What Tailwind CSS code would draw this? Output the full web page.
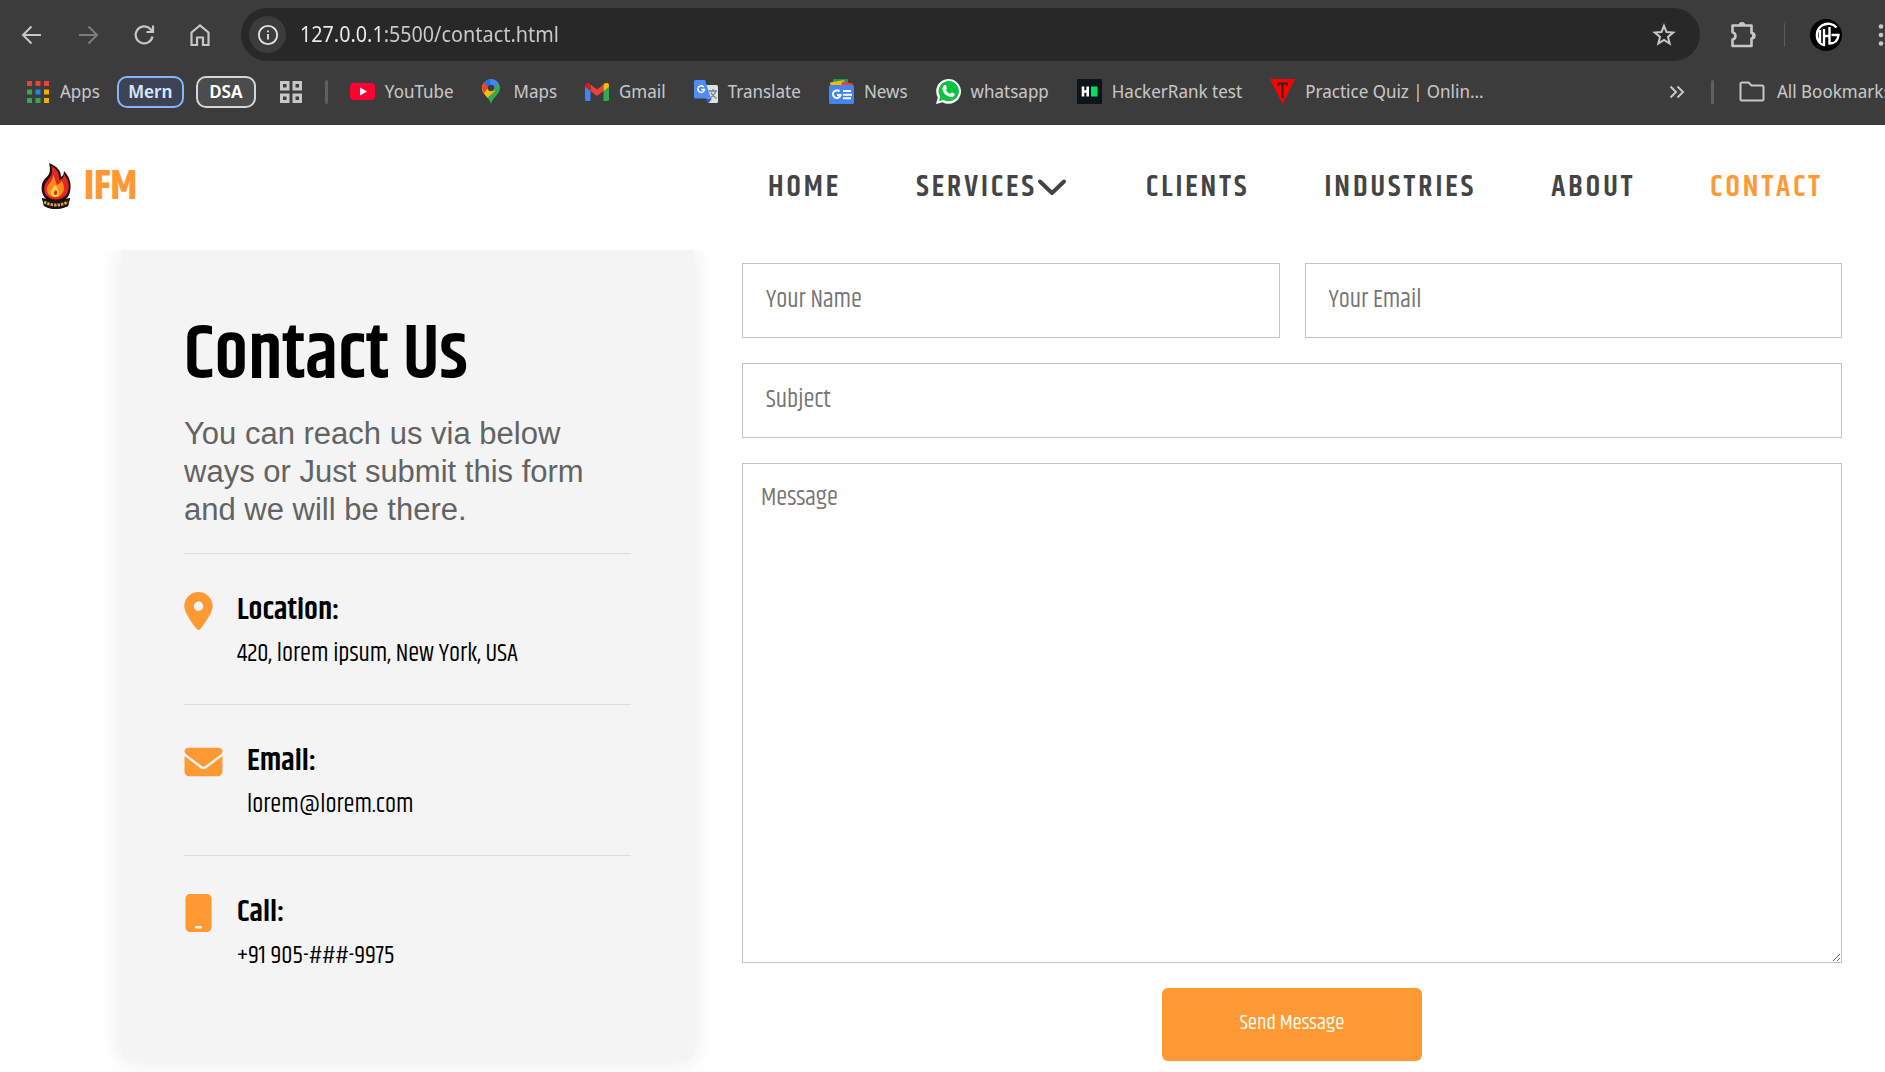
<!DOCTYPE html>
<html lang="en">
<head>
<meta charset="utf-8">
<meta name="viewport" content="width=device-width, initial-scale=1">
<title>IFM - Contact</title>
<script src="https://cdn.jsdelivr.net/npm/@tailwindcss/browser@4"></script>
</head>
<body class="min-h-screen overflow-x-hidden bg-white font-['Khand',sans-serif] text-black">

<!-- Browser toolbar -->
<header class="h-[125px] overflow-hidden bg-[#3c3c3c] pt-2 font-['Noto_Sans_Display','Open_Sans',sans-serif] text-[#c7c7c7]">
  <div class="flex h-[53px] items-center">
    <div class="flex w-[241px] shrink-0 items-center gap-8 pl-5">
      <button type="button" aria-label="Back"><svg class="size-6" viewBox="0 0 24 24" fill="none" stroke="currentColor" stroke-width="2"><path d="M21 12H3.500M11.500 3.500 3 12l8.500 8.500"/></svg></button>
      <button type="button" aria-label="Forward" class="text-[#7c7c7c]"><svg class="size-6" viewBox="0 0 24 24" fill="none" stroke="currentColor" stroke-width="2"><path d="M3 12h17.500M12.500 3.500 21 12l-8.500 8.500"/></svg></button>
      <button type="button" aria-label="Reload"><svg class="size-6" viewBox="0 0 24 24" fill="none" stroke="currentColor" stroke-width="2.200"><path d="M20.500 13.500A8.500 8.500 0 1 1 18.300 6l2 2.200M21 2.500V9h-6.500"/></svg></button>
      <button type="button" aria-label="Home"><svg class="size-6" viewBox="0 0 24 24" fill="none" stroke="currentColor" stroke-width="2.200"><path d="M3.500 9.500 12 2.500l8.500 7V22H15v-7.500H9V22H3.500z"/></svg></button>
    </div>
    <div class="flex h-full min-w-0 flex-1 items-center rounded-full bg-[#282828] pr-6 pl-2">
      <button type="button" aria-label="Site information" class="grid size-[37px] shrink-0 place-items-center rounded-full bg-[#3c3c3c] text-[#e3e3e3]"><svg class="size-[22px]" viewBox="0 0 24 24" fill="none" stroke="currentColor" stroke-width="2"><circle cx="12" cy="12" r="10"/><path d="M12 11v6M12 7v2"/></svg></button>
      <input type="text" aria-label="Address" value="127.0.0.1:5500/contact.html" class="ml-3.5 h-full min-w-0 flex-1 bg-[linear-gradient(90deg,#ececec_84px,#c9c9c9_84px)] bg-clip-text pb-0.5 text-[21px] text-transparent outline-none">
      <button type="button" aria-label="Bookmark this page"><svg class="size-6" viewBox="0 0 24 24" fill="none" stroke="currentColor" stroke-width="2"><path d="m12 2.800 2.500 6.300 6.700.5-5.200 4.300 1.700 6.600L12 16.900l-5.700 3.600L8 13.900 2.800 9.600l6.700-.5z"/></svg></button>
    </div>
    <div class="flex h-full w-[185px] shrink-0 items-center">
      <button type="button" aria-label="Extensions" class="ml-[29px]"><svg class="size-7" viewBox="0 0 28 28" fill="none" stroke="currentColor" stroke-width="2.600" stroke-linejoin="round"><path d="M3.500 4.500H22.500v7.500a2.800 2.800 0 0 1 0 5.600v7.400h-19v-6.400a3.800 3.800 0 0 0 0-7.400z"/><path fill="currentColor" stroke="none" d="M9.500 4.500a3.500 3.500 0 0 1 7 0zM23 11.500a3.300 3.300 0 0 1 0 6.600z"/></svg></button>
      <span class="ml-[27px] h-6 w-[3px] rounded bg-[#5c5c5c]"></span>
      <button type="button" aria-label="Profile" class="ml-[25px]"><svg class="size-8" viewBox="0 0 32 32" fill="none" stroke="#fff" stroke-width="2.400"><circle cx="16" cy="16" r="16" fill="#000" stroke="none"/><path d="M26.500 8.500C23 4.500 17 3.500 12 6.500 6 10 5.500 19 9.500 23.500c1.500 1.600 3 2.300 4.500 2.500V10M14 17h5M19.500 8v16.500c5.500 0 8.500-3.500 9-8.500h-7M10 11v12"/></svg></button>
      <button type="button" aria-label="Menu" class="ml-[19px] shrink-0"><svg class="h-6 w-6" viewBox="0 0 24 24" fill="currentColor"><circle cx="20" cy="3.500" r="2.300"/><circle cx="20" cy="12" r="2.300"/><circle cx="20" cy="20.500" r="2.300"/></svg></button>
    </div>
  </div>

  <nav aria-label="Bookmarks" class="flex h-[61px] items-center pl-[27px] text-lg whitespace-nowrap">
    <a href="#" class="flex items-center gap-[11px]"><svg class="size-[22px]" viewBox="0 0 22 22"><path fill="#ea4335" d="M0 0h5v5H0zM8.500 0h5v5h-5zM17 0h5v5h-5z"/><path fill="#34a853" d="M0 8.500h5v5H0zM0 17h5v5H0zM8.500 17h5v5h-5z"/><path fill="#1e88e5" d="M8.500 8.500h5v5h-5z"/><path fill="#fbab00" d="M17 8.500h5v5h-5zM17 17h5v5h-5z"/></svg><span class="pb-0.5">Apps</span></a>
    <a href="#" class="ml-[17px] flex h-8 w-[67px] items-center justify-center rounded-[10px] border-2 border-[#8ab4f8] bg-[#3b4354] pb-0.5 font-semibold text-[#d6e5ff]">Mern</a>
    <a href="#" class="ml-3 flex h-8 w-[60px] items-center justify-center rounded-[10px] border-2 border-[#d5d6d8] bg-[#4b4c4e] pb-0.5 font-semibold text-white">DSA</a>
    <button type="button" aria-label="Tab groups" class="ml-[23px]"><svg class="size-6" viewBox="0 0 24 24" fill="none" stroke="currentColor" stroke-width="3"><path d="M2.500 2.500h6.500v6.500H2.500zM15 2.500h6.500v6.500H15zM2.500 15h6.500v6.500H2.500zM15 15h6.500v6.500H15z"/></svg></button>
    <span class="ml-[22px] h-6 w-[3px] rounded bg-[#5f5f5f]"></span>
    <div class="ml-[22px] flex items-center gap-7">
      <a href="#" class="flex items-center gap-2.5"><svg class="h-[17px] w-[25px]" viewBox="0 0 25 17"><rect width="25" height="17" rx="4" fill="#ff0033"/><path fill="#fff" d="m10 4.500 7 4-7 4z"/></svg><span class="pb-0.5">YouTube</span></a>
      <a href="#" class="flex items-center gap-3.5"><svg class="h-[25px] w-[18px]" viewBox="0 0 18 25"><defs><clipPath id="pin"><path d="M9 0a9 9 0 0 0-9 9c0 6.500 6.500 8 9 16 2.500-8 9-9.500 9-16a9 9 0 0 0-9-9z"/></clipPath></defs><g clip-path="url(#pin)"><path fill="#34a853" d="M0 0h18v25H0z"/><path fill="#fbbc04" d="M0 6h9l4 6-9 8H0z"/><path fill="#ea4335" d="m2 2 6 5-6 7-2-4V3z"/><path fill="#1a73e8" d="M2 3 9-1l3 1-6 8z"/><path fill="#4285f4" d="m8 0 10-1v4l-9 9z"/></g><circle cx="9" cy="9" r="3.200" fill="#3c3c3c"/></svg><span class="pb-0.5">Maps</span></a>
      <a href="#" class="flex items-center gap-2.5"><svg class="h-[18px] w-6" viewBox="0 0 24 18"><path fill="#4285f4" d="M0 3v13.500A1.500 1.500 0 0 0 1.500 18H5.500V7z"/><path fill="#34a853" d="M24 3v13.500a1.500 1.500 0 0 1-1.500 1.500H18.500V7z"/><path fill="#ea4335" d="M5.500 1.500 12 6.500l6.500-5V8L12 13 5.500 8z"/><path fill="#c5221f" d="M0 2.300C0 0 2.600-.8 4.400.6l1.100.9V8L0 4z"/><path fill="#fbbc04" d="M24 2.300C24 0 21.400-.8 19.600.6l-1.100.9V8L24 4z"/></svg><span class="pb-0.5">Gmail</span></a>
      <a href="#" class="flex items-center gap-2.5"><svg class="size-6" viewBox="0 0 24 24"><path fill="#e0e0e0" d="M9 5h13.500A1.500 1.500 0 0 1 24 6.500v15a1.500 1.500 0 0 1-1.500 1.500H14z"/><path fill="#3457c4" d="M12 18.500h6L14 24z"/><path fill="#4f8df5" d="M1.500 0H11l6 18.500H1.500A1.500 1.500 0 0 1 0 17V1.500A1.500 1.500 0 0 1 1.500 0z"/><path fill="none" stroke="#fff" stroke-width="1.500" d="M9.800 7A3.300 3.300 0 1 0 10.500 9.500H7.300"/><path fill="none" stroke="#6f8790" stroke-width="1.300" d="M15 11h8M19 9v2M21.500 11c-.5 3-3 5.500-5.500 7M17 12.500c1 2.500 3 4.500 5.500 6"/></svg><span class="pb-0.5">Translate</span></a>
      <a href="#" class="flex items-center gap-2.5"><svg class="size-[25px]" viewBox="0 0 25 25"><path fill="#0f9d58" d="M4 0h15v8H4z"/><path fill="#fbbc04" d="m1 3.500 14-2.500 1 7H2z"/><path fill="#ea4335" d="m13 2.500 11 2L23 9H12z"/><rect y="6" width="25" height="19" rx="1.500" fill="#4285f4"/><path fill="none" stroke="#fff" stroke-width="2" d="M10.500 12.500a3.800 3.800 0 1 0 1 3.500H8M14 12h8M14 15.700h9M14 19.300h8"/></svg><span class="pb-0.5">News</span></a>
      <a href="#" class="flex items-center gap-2.5"><svg class="size-[25px]" viewBox="0 0 25 25"><path fill="#fff" d="M0 25 1.800 18.500A12.400 12.400 0 1 1 6.500 23.200z"/><path fill="#0dc143" d="m3 22 1.200-4.300a10.200 10.200 0 1 1 3.500 3.300z"/><path fill="#fff" d="M8 6.500c.6-.6 1.600-.6 1.900.1l1 2.300c.2.500-.8 1.600-1 2 .9 1.900 2.400 3.200 4.300 4 .6-.6 1.300-1.700 1.800-1.500l2.300 1.200c.6.300.4 1.500 0 2.200-.8 1.200-2.500 1.700-4 1.300-3.900-1.100-6.700-3.800-7.800-7.200-.4-1.600.4-3.400 1.500-4.400z"/></svg><span class="pb-0.5">whatsapp</span></a>
      <a href="#" class="flex items-center gap-2.5"><svg class="size-[25px]" viewBox="0 0 25 25"><path fill="#0e141e" d="M0 0h25v25H0z"/><path fill="none" stroke="#fff" stroke-width="2.600" d="M6 7.500v10M10.700 7.500v10M6 12.500h5"/><path fill="#05e062" d="M14 7.500h6.500v10H14z"/></svg><span class="pb-0.5">HackerRank test</span></a>
      <a href="#" class="flex items-center gap-2.5"><svg class="size-[25px]" viewBox="0 0 25 25"><path fill="#f00" d="M0 0h25L12.500 25z"/><path fill="none" stroke="#3c1a1a" stroke-width="2" d="M7 4.500h11M12.500 5v14M8 7V4.500M17 7V4.500"/></svg><span class="pb-0.5">Practice Quiz | Onlin...</span></a>
    </div>
    <div class="ml-auto flex w-[216px] shrink-0 items-center">
      <button type="button" aria-label="More bookmarks"><svg class="size-4" viewBox="0 0 16 16" fill="none" stroke="currentColor" stroke-width="2"><path d="m1.500 2.500 5.500 5.500-5.500 5.500M8.500 2.500 14 8l-5.500 5.500"/></svg></button>
      <span class="ml-[26px] h-6 w-[3px] shrink-0 rounded bg-[#5f5f5f]"></span>
      <a href="#" class="ml-[25px] flex items-center gap-3"><svg class="h-[21px] w-[26px] shrink-0" viewBox="0 0 26 21" fill="none" stroke="currentColor" stroke-width="2"><path d="M1.500 3A1.500 1.500 0 0 1 3 1.500h6.500l3 3H23A1.500 1.500 0 0 1 24.500 6v12a1.500 1.500 0 0 1-1.500 1.500H3A1.500 1.500 0 0 1 1.500 18z"/></svg><span class="pb-0.5">All Bookmarks</span></a>
    </div>
  </nav>
</header>

<!-- Site header -->
<div class="flex h-[125px] items-center justify-between bg-white pr-[62px] pb-0.5 pl-10">
  <a href="#" class="flex items-center gap-3 text-[41px] leading-[50px] font-bold text-[#ff9933]">
    <svg class="mb-0.5 h-12 w-8" viewBox="0 0 32 48"><path fill="#1c1110" d="M9 1c9 4 12 8 12 14 2-1 3-3 3-6 5 5 8 12 6 21-1 4-3 6-4 7l4-1-2 8c-8 4-17 4-24 0L2 36l4 1C0 31 1 22 4 18c3-4 8-5 5-17z"/><path fill="#e5261f" d="M11 4c6 3 9 7 8 14 3 0 5-3 5-6 6 8 6 16 2 21-5 6-15 6-20 0-3-5-2-10 1-14s7-7 4-15z"/><path fill="#ff8a1f" d="M13 13c3 4 2 7 4 10 2-1 4-2 4-5 4 6 4 11 0 15-3 3-8 3-12 0-4-5-2-9 1-12 2-3 3-5 3-8z"/><path fill="#ffd04a" d="M15 21c0 4 5 6 4 11-1 4-7 4-8 0-1-3 1-4 2-6 1-1 2-3 2-5z"/><path fill="#e5261f" d="M16 27c0 2 2 3 1 5s-3 1-3-1 2-2 2-4z"/><path fill="#1c1110" d="m2 36 3 1c7 4 15 4 22 0l3-1-2 8c-8 4-17 4-24 0z"/><path fill="none" stroke="#d9a047" stroke-width="3" stroke-dasharray="2.500 1" d="M4 40c8 4 16 4 24 0"/></svg>
    <span class="pt-0.5">IFM</span>
  </a>
  <nav aria-label="Main" class="flex items-center gap-[75px] text-[30px] leading-9 font-semibold tracking-[3px] text-[#444444]">
    <a href="#">HOME</a>
    <a href="#" class="flex items-center">SERVICES<svg class="mr-1 h-5 w-[30px]" viewBox="0 0 30 20" fill="none" stroke="currentColor" stroke-width="4" stroke-linecap="round" stroke-linejoin="round"><path d="m3 4.500 12 11.500 12-11.500"/></svg></a>
    <a href="#">CLIENTS</a>
    <a href="#">INDUSTRIES</a>
    <a href="#">ABOUT</a>
    <a href="#" aria-current="page" class="text-[#ff9933]">CONTACT</a>
  </nav>
</div>

<!-- Contact section -->
<main class="flex items-start gap-[49px] overflow-hidden pr-[43px] pb-3 pl-[122px]">
  <section class="h-[810px] w-[571px] shrink-0 rounded-b-lg bg-[#f4f4f4] px-[62px] pt-[63px] shadow-[0_0_25px_rgba(0,0,0,0.10)]">
    <h1 class="text-[75px] leading-[88px] font-semibold">Contact Us</h1>
    <p class="mt-3.5 border-b border-[#dddddd] pb-6 font-['Liberation_Sans',Arial,sans-serif] text-[31px] leading-[38px] text-[#636363]">You can reach us via below ways or Just submit this form and we will be there.</p>

    <div class="flex h-[151px] gap-6 border-b border-[#dddddd] pt-9">
      <svg class="mt-0.5 h-[38px] w-[29px] shrink-0" viewBox="0 0 384 512" fill="#ff9933"><path d="M215.700 499.200C267 435 384 279.400 384 192 384 86 298 0 192 0S0 86 0 192c0 87.400 117 243 168.300 307.200 12.300 15.300 35.100 15.300 47.400 0zM192 128a64 64 0 1 1 0 128 64 64 0 1 1 0-128z"/></svg>
      <div>
        <h2 class="text-[31px] leading-10 font-semibold">Location:</h2>
        <p class="mt-1 text-[25px] leading-10">420, lorem ipsum, New York, USA</p>
      </div>
    </div>
    <div class="flex h-[151px] gap-6 border-b border-[#dddddd] pt-9">
      <svg class="mt-0.5 h-[38px] w-[39px] shrink-0" viewBox="0 0 512 512" fill="#ff9933"><path d="M48 64C21.500 64 0 85.500 0 112c0 15.100 7.100 29.300 19.200 38.400l217.600 163.200c11.400 8.500 27 8.500 38.400 0l217.600-163.200c12.100-9.100 19.200-23.300 19.200-38.400 0-26.500-21.500-48-48-48H48zM0 176v208c0 35.300 28.700 64 64 64h384c35.300 0 64-28.700 64-64V176L294.400 339.200c-22.800 17.100-54 17.100-76.800 0L0 176z"/></svg>
      <div>
        <h2 class="text-[31px] leading-10 font-semibold">Email:</h2>
        <p class="mt-1 text-[25px] leading-10">lorem@lorem.com</p>
      </div>
    </div>
    <div class="flex h-[151px] gap-6 pt-9">
      <svg class="mt-0.5 h-[38px] w-[29px] shrink-0" viewBox="0 0 384 512" fill="#ff9933"><path d="M16 64C16 28.700 44.700 0 80 0h224c35.300 0 64 28.700 64 64v384c0 35.300-28.700 64-64 64H80c-35.300 0-64-28.700-64-64V64zm128 384c0 8.800 7.200 16 16 16h64c8.800 0 16-7.200 16-16s-7.200-16-16-16h-64c-8.800 0-16 7.200-16 16z"/></svg>
      <div>
        <h2 class="text-[31px] leading-10 font-semibold">Call:</h2>
        <p class="mt-1 text-[25px] leading-10">+91 905-###-9975</p>
      </div>
    </div>
  </section>

  <form class="grid min-w-0 flex-1 grid-cols-2 gap-[25px] pt-[13px]">
    <input type="text" aria-label="Your Name" placeholder="Your Name" class="h-[75px] w-full border border-[#c4c4c4] px-[23px] pb-0.5 text-[25px] placeholder:text-[#757575]">
    <input type="email" aria-label="Your Email" placeholder="Your Email" class="h-[75px] w-full border border-[#c4c4c4] px-[23px] pb-0.5 text-[25px] placeholder:text-[#757575]">
    <input type="text" aria-label="Subject" placeholder="Subject" class="col-span-2 h-[75px] w-full border border-[#c4c4c4] px-[23px] pb-0.5 text-[25px] placeholder:text-[#757575]">
    <textarea aria-label="Message" placeholder="Message" class="col-span-2 h-[500px] w-full border border-[#c4c4c4] px-[18px] py-3.5 text-[25px] leading-10 placeholder:text-[#757575]"></textarea>
    <button type="submit" class="col-span-2 h-[73px] w-[260px] justify-self-center rounded-md bg-[#ff9933] pb-0.5 text-[21px] text-white">Send Message</button>
  </form>
</main>
</body>
</html>
